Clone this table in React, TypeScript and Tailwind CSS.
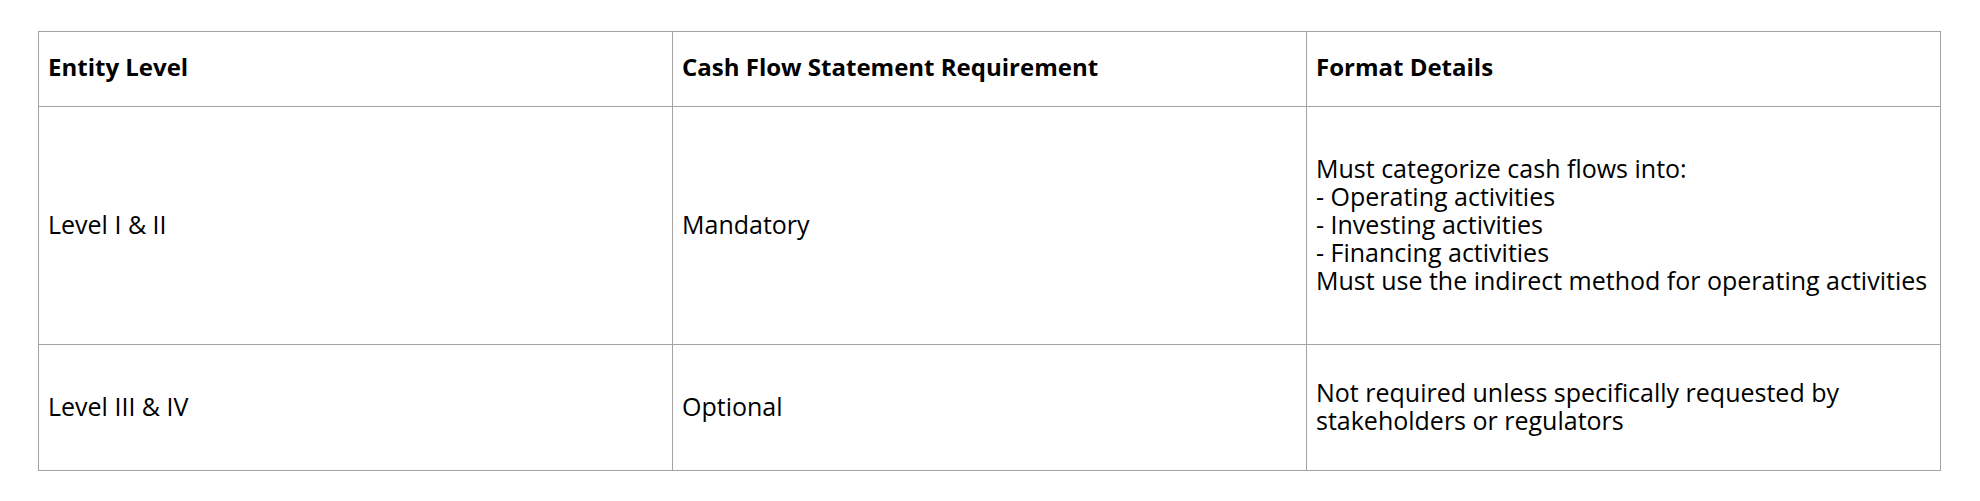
import React from 'react';

const rows = [
  {
    level: 'Level I & II',
    requirement: 'Mandatory',
    details: [
      'Must categorize cash flows into:',
      '- Operating activities',
      '- Investing activities',
      '- Financing activities',
      'Must use the indirect method for operating activities',
    ],
    height: 'h-[238px]',
  },
  {
    level: 'Level III & IV',
    requirement: 'Optional',
    details: ['Not required unless specifically requested by', 'stakeholders or regulators'],
    height: 'h-[126px]',
  },
];

const cell = 'border border-[#a3a3a3] px-[9px] align-middle text-left';

export default function App() {
  return (
    <div className="min-h-[501px] w-[1980px] bg-white pt-[31px] pl-[38px] font-['Open_Sans',sans-serif] text-[25px] leading-[28px] text-black">
      <table className="w-[1903px] table-fixed border-collapse">
        <thead>
          <tr className="h-[75px]">
            <th className={`${cell} pb-[4px] text-[24px] font-bold`}>Entity Level</th>
            <th className={`${cell} pb-[4px] text-[24px] font-bold`}>Cash Flow Statement Requirement</th>
            <th className={`${cell} pb-[4px] text-[24px] font-bold`}>Format Details</th>
          </tr>
        </thead>
        <tbody>
          {rows.map((row) => (
            <tr key={row.level} className={row.height}>
              <td className={`${cell} pb-[4px]`}>{row.level}</td>
              <td className={`${cell} pb-[4px]`}>{row.requirement}</td>
              <td className={`${cell} pb-[4px]`}>
                <p>
                  {row.details.map((line, i) => (
                    <React.Fragment key={line}>
                      {i > 0 && <br />}
                      {line}
                    </React.Fragment>
                  ))}
                </p>
              </td>
            </tr>
          ))}
        </tbody>
      </table>
    </div>
  );
}
